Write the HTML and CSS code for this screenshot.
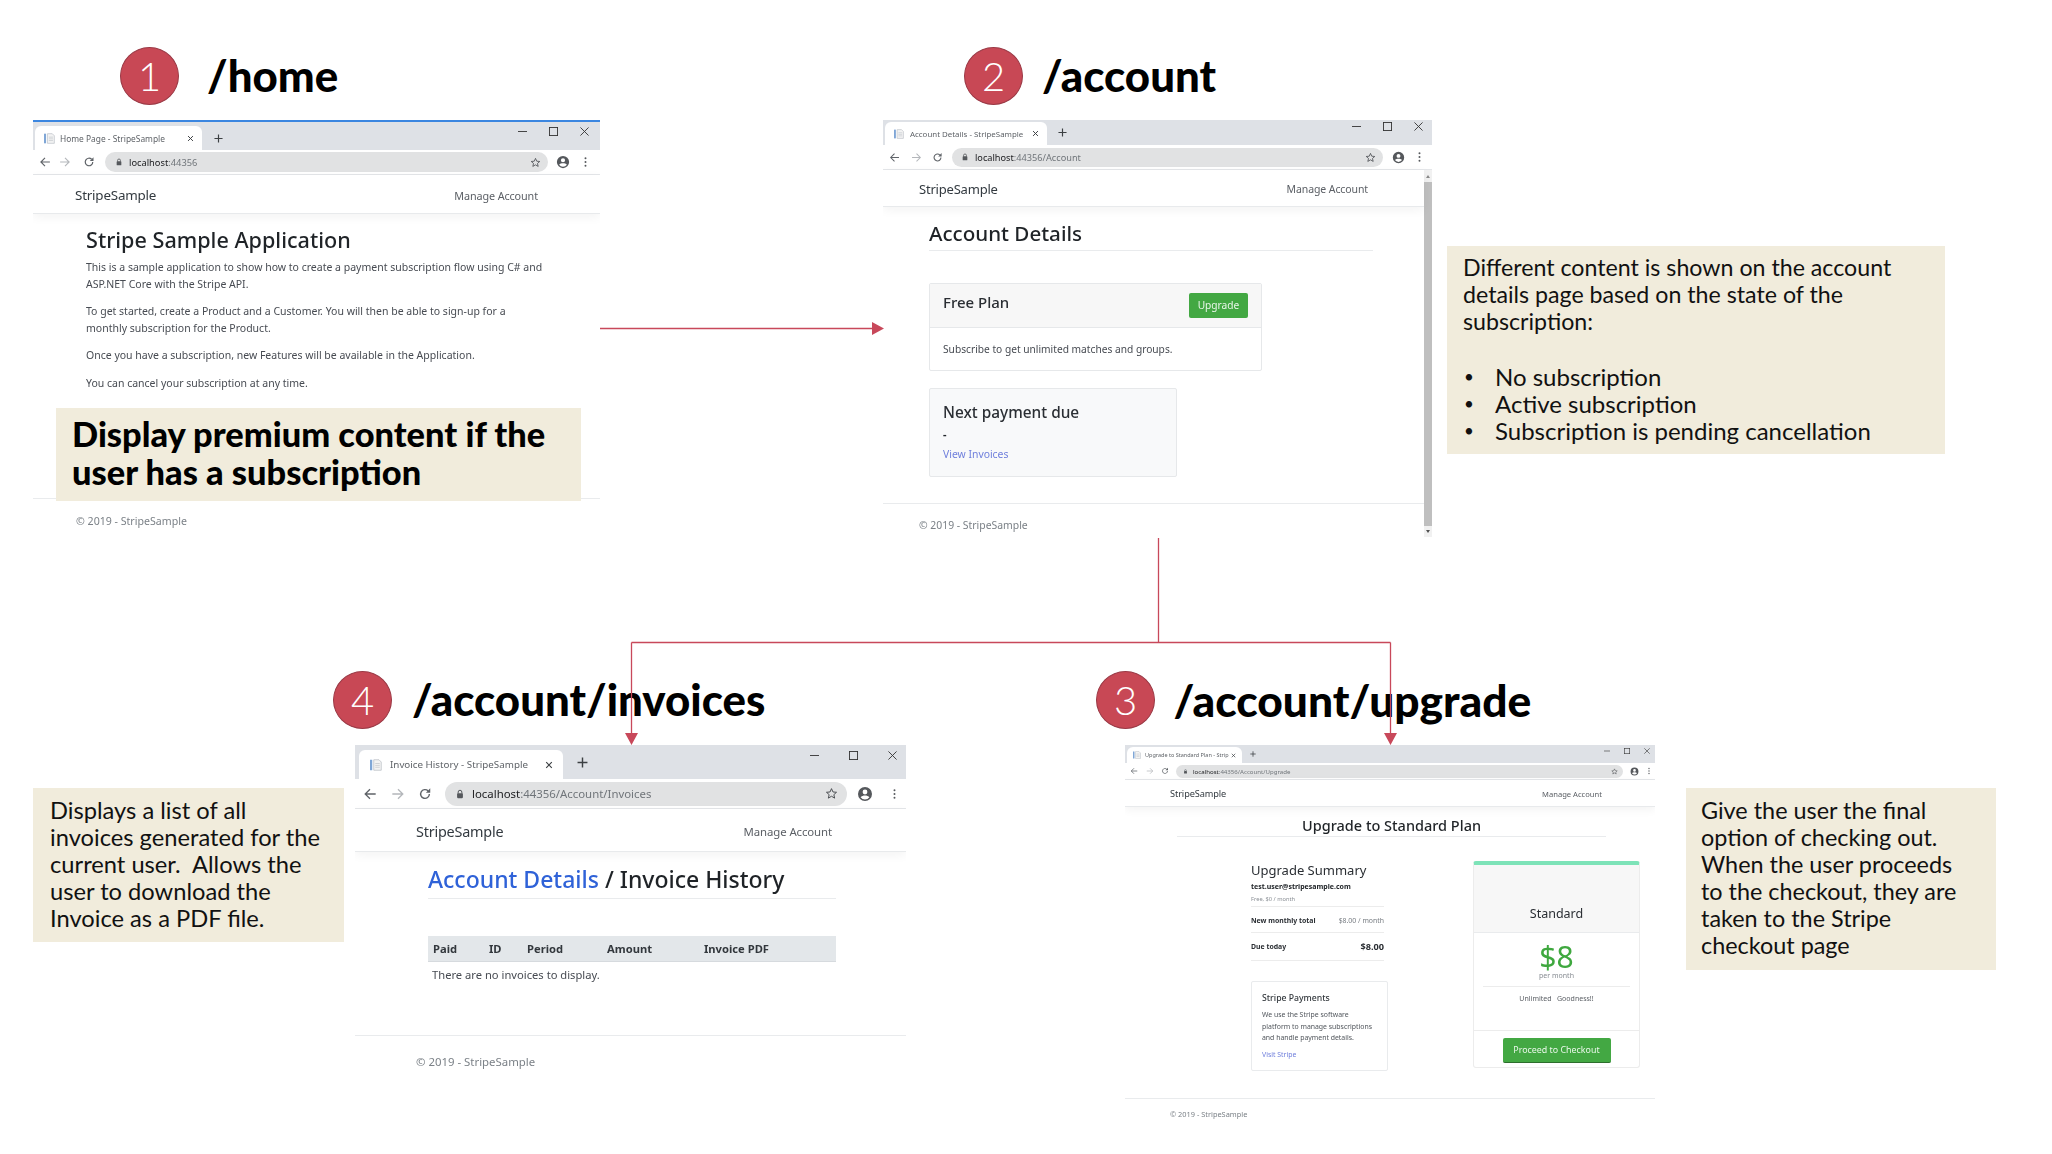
FILE: index.html
```html
<!DOCTYPE html>
<html lang="en">
<head>
<meta charset="utf-8">
<title>Stripe Sample page flow</title>
<link rel="stylesheet" href="styles.css">
</head>
<body>
<svg class="defs" width="0" height="0" aria-hidden="true">
  <symbol id="i-doc" viewBox="0 0 16 16"><rect x="0" y="1" width="3" height="14" fill="#7fa6d6"/><path d="M5 1h7l3 3v11H5z" fill="#f3f3f3" stroke="#b9bec4"/><path d="M7 6h6M7 8.500h6M7 11h6" stroke="#c2c6cb"/></symbol>
  <symbol id="i-x" viewBox="0 0 10 10"><path d="M1.500 1.500l7 7M8.500 1.500l-7 7" fill="none" stroke="currentColor" stroke-width="1.400"/></symbol>
  <symbol id="i-plus" viewBox="0 0 10 10"><path d="M5 .5v9M.5 5h9" fill="none" stroke="currentColor" stroke-width="1.300"/></symbol>
  <symbol id="i-min" viewBox="0 0 10 10"><path d="M0 5h10" stroke="currentColor" fill="none"/></symbol>
  <symbol id="i-max" viewBox="0 0 10 10"><rect x=".5" y=".5" width="9" height="9" fill="none" stroke="currentColor"/></symbol>
  <symbol id="i-close" viewBox="0 0 10 10"><path d="M.5 .5l9 9M9.500 .5l-9 9" fill="none" stroke="currentColor"/></symbol>
  <symbol id="i-back" viewBox="0 0 16 16"><path d="M14.500 8H2.500M8 2.500L2.500 8 8 13.500" fill="none" stroke="currentColor" stroke-width="1.500"/></symbol>
  <symbol id="i-fwd" viewBox="0 0 16 16"><path d="M1.500 8h12M8 2.500L13.500 8 8 13.500" fill="none" stroke="currentColor" stroke-width="1.500"/></symbol>
  <symbol id="i-reload" viewBox="0 0 16 16"><path d="M13 8a5 5 0 1 1-1.500-3.600" fill="none" stroke="currentColor" stroke-width="1.600"/><path d="M14 1.500V6.500H9z" fill="currentColor"/></symbol>
  <symbol id="i-lock" viewBox="0 0 12 12"><path d="M3.800 5.500V3.700a2.200 2.200 0 0 1 4.400 0v1.800" fill="none" stroke="currentColor" stroke-width="1.200"/><rect x="2.500" y="5" width="7" height="6" rx="1" fill="currentColor"/></symbol>
  <symbol id="i-star" viewBox="0 0 16 16"><path d="M8 2l1.800 4.100 4.400.4-3.300 2.900 1 4.300L8 11.400l-3.900 2.300 1-4.300-3.300-2.900 4.400-.4z" fill="none" stroke="currentColor" stroke-width="1.200"/></symbol>
  <symbol id="i-user" viewBox="0 0 16 16"><path fill-rule="evenodd" d="M8 1a7 7 0 1 0 0 14A7 7 0 0 0 8 1zm0 2.600a2.400 2.400 0 1 1 0 4.800 2.400 2.400 0 0 1 0-4.800zM8 13.400a5.600 5.600 0 0 1-4.400-2.200c.8-1.200 2.900-1.700 4.400-1.700s3.600.5 4.400 1.700A5.600 5.600 0 0 1 8 13.400z" fill="currentColor"/></symbol>
  <symbol id="i-dots" viewBox="0 0 4 16"><circle cx="2" cy="3" r="1.300" fill="currentColor"/><circle cx="2" cy="8" r="1.300" fill="currentColor"/><circle cx="2" cy="13" r="1.300" fill="currentColor"/></symbol>
</svg>

<main class="slide">

  <!-- 1 /home -->
  <section class="win win-home">
    <div class="strip">
      <div class="tab"><svg class="ico-fav"><use href="#i-doc"/></svg><span class="tab-title">Home Page - StripeSample</span><svg class="ico-x"><use href="#i-x"/></svg></div>
      <svg class="ico-plus"><use href="#i-plus"/></svg>
      <div class="winbtns"><svg class="ico-w"><use href="#i-min"/></svg><svg class="ico-w"><use href="#i-max"/></svg><svg class="ico-w"><use href="#i-close"/></svg></div>
    </div>
    <div class="tool">
      <svg class="ico-nav"><use href="#i-back"/></svg><svg class="ico-nav dim"><use href="#i-fwd"/></svg><svg class="ico-nav"><use href="#i-reload"/></svg>
      <div class="pill"><svg class="ico-lock"><use href="#i-lock"/></svg><span class="url"><b>localhost</b>:44356</span><svg class="ico-star"><use href="#i-star"/></svg></div>
      <svg class="ico-user"><use href="#i-user"/></svg><svg class="ico-dots"><use href="#i-dots"/></svg>
    </div>
    <nav class="nav"><span class="brand">StripeSample</span><span class="manage">Manage Account</span></nav>
    <div class="main">
      <h1 class="h1">Stripe Sample Application</h1>
      <p class="p">This is a sample application to show how to create a payment subscription flow using C# and<br>ASP.NET Core with the Stripe API.</p>
      <p class="p">To get started, create a Product and a Customer. You will then be able to sign-up for a<br>monthly subscription for the Product.</p>
      <p class="p">Once you have a subscription, new Features will be available in the Application.</p>
      <p class="p">You can cancel your subscription at any time.</p>
    </div>
    <footer class="foot">© 2019 - StripeSample</footer>
  </section>

  <!-- 2 /account -->
  <section class="win win-account">
    <div class="strip">
      <div class="tab"><svg class="ico-fav"><use href="#i-doc"/></svg><span class="tab-title">Account Details - StripeSample</span><svg class="ico-x"><use href="#i-x"/></svg></div>
      <svg class="ico-plus"><use href="#i-plus"/></svg>
      <div class="winbtns"><svg class="ico-w"><use href="#i-min"/></svg><svg class="ico-w"><use href="#i-max"/></svg><svg class="ico-w"><use href="#i-close"/></svg></div>
    </div>
    <div class="tool">
      <svg class="ico-nav"><use href="#i-back"/></svg><svg class="ico-nav dim"><use href="#i-fwd"/></svg><svg class="ico-nav"><use href="#i-reload"/></svg>
      <div class="pill"><svg class="ico-lock"><use href="#i-lock"/></svg><span class="url"><b>localhost</b>:44356/Account</span><svg class="ico-star"><use href="#i-star"/></svg></div>
      <svg class="ico-user"><use href="#i-user"/></svg><svg class="ico-dots"><use href="#i-dots"/></svg>
    </div>
    <div class="viewport">
      <div class="page">
        <nav class="nav"><span class="brand">StripeSample</span><span class="manage">Manage Account</span></nav>
        <div class="main">
          <h1 class="h1 ruled">Account Details</h1>
          <div class="plan">
            <div class="plan-head"><span class="plan-name">Free Plan</span><span class="btn-up">Upgrade</span></div>
            <div class="plan-body">Subscribe to get unlimited matches and groups.</div>
          </div>
          <div class="due">
            <div class="due-title">Next payment due</div>
            <div class="due-val">-</div>
            <div class="link">View Invoices</div>
          </div>
        </div>
        <footer class="foot">© 2019 - StripeSample</footer>
      </div>
      <div class="scrollbar"><span class="sb-up"></span><span class="sb-thumb"></span><span class="sb-down"></span></div>
    </div>
  </section>

  <!-- 4 /account/invoices -->
  <section class="win win-invoices">
    <div class="strip">
      <div class="tab"><svg class="ico-fav"><use href="#i-doc"/></svg><span class="tab-title">Invoice History - StripeSample</span><svg class="ico-x"><use href="#i-x"/></svg></div>
      <svg class="ico-plus"><use href="#i-plus"/></svg>
      <div class="winbtns"><svg class="ico-w"><use href="#i-min"/></svg><svg class="ico-w"><use href="#i-max"/></svg><svg class="ico-w"><use href="#i-close"/></svg></div>
    </div>
    <div class="tool">
      <svg class="ico-nav"><use href="#i-back"/></svg><svg class="ico-nav dim"><use href="#i-fwd"/></svg><svg class="ico-nav"><use href="#i-reload"/></svg>
      <div class="pill"><svg class="ico-lock"><use href="#i-lock"/></svg><span class="url"><b>localhost</b>:44356/Account/Invoices</span><svg class="ico-star"><use href="#i-star"/></svg></div>
      <svg class="ico-user"><use href="#i-user"/></svg><svg class="ico-dots"><use href="#i-dots"/></svg>
    </div>
    <nav class="nav"><span class="brand">StripeSample</span><span class="manage">Manage Account</span></nav>
    <div class="main">
      <h1 class="h1 ruled"><span class="h1-link">Account Details</span> / Invoice History</h1>
      <div class="thead"><span>Paid</span><span>ID</span><span>Period</span><span>Amount</span><span>Invoice PDF</span></div>
      <div class="tnone">There are no invoices to display.</div>
    </div>
    <footer class="foot">© 2019 - StripeSample</footer>
  </section>

  <!-- 3 /account/upgrade -->
  <section class="win win-upgrade">
    <div class="strip">
      <div class="tab"><svg class="ico-fav"><use href="#i-doc"/></svg><span class="tab-title">Upgrade to Standard Plan - Strip</span><svg class="ico-x"><use href="#i-x"/></svg></div>
      <svg class="ico-plus"><use href="#i-plus"/></svg>
      <div class="winbtns"><svg class="ico-w"><use href="#i-min"/></svg><svg class="ico-w"><use href="#i-max"/></svg><svg class="ico-w"><use href="#i-close"/></svg></div>
    </div>
    <div class="tool">
      <svg class="ico-nav"><use href="#i-back"/></svg><svg class="ico-nav dim"><use href="#i-fwd"/></svg><svg class="ico-nav"><use href="#i-reload"/></svg>
      <div class="pill"><svg class="ico-lock"><use href="#i-lock"/></svg><span class="url"><b>localhost</b>:44356/Account/Upgrade</span><svg class="ico-star"><use href="#i-star"/></svg></div>
      <svg class="ico-user"><use href="#i-user"/></svg><svg class="ico-dots"><use href="#i-dots"/></svg>
    </div>
    <nav class="nav"><span class="brand">StripeSample</span><span class="manage">Manage Account</span></nav>
    <div class="main">
      <h1 class="h1 ruled centered">Upgrade to Standard Plan</h1>
      <div class="up-cols">
        <div class="up-left">
          <div class="sum-title">Upgrade Summary</div>
          <div class="sum-mail">test.user@stripesample.com</div>
          <div class="sum-free">Free, $0 / month</div>
          <div class="sum-row"><b>New monthly total</b><span class="muted">$8.00 / month</span></div>
          <div class="sum-row due-row"><b>Due today</b><b class="sum-amt">$8.00</b></div>
          <div class="pay">
            <div class="pay-title">Stripe Payments</div>
            <div class="pay-text">We use the Stripe software<br>platform to manage subscriptions<br>and handle payment details.</div>
            <div class="pay-link">Visit Stripe</div>
          </div>
        </div>
        <div class="price">
          <div class="price-head">Standard</div>
          <div class="price-body">
            <div class="price-amt">$8</div>
            <div class="price-per">per month</div>
            <div class="price-feat">Unlimited&nbsp;&nbsp;&nbsp;Goodness!!</div>
          </div>
          <div class="price-foot"><span class="btn-go">Proceed to Checkout</span></div>
        </div>
      </div>
    </div>
    <footer class="foot">© 2019 - StripeSample</footer>
  </section>

  <!-- route titles -->
  <header class="route route-1"><span class="num">1</span><h2 class="route-name">/home</h2></header>
  <header class="route route-2"><span class="num">2</span><h2 class="route-name">/account</h2></header>
  <header class="route route-4"><span class="num">4</span><h2 class="route-name">/account/invoices</h2></header>
  <header class="route route-3"><span class="num">3</span><h2 class="route-name route-name-wide">/account/upgrade</h2></header>

  <!-- callouts -->
  <div class="note note-premium">Display premium content if the<br>user has a subscription</div>
  <div class="note note-account">
    <p class="note-p">Different content is shown on the account<br>details page based on the state of the<br>subscription:</p>
    <ul class="note-list"><li>No subscription</li><li>Active subscription</li><li>Subscription is pending cancellation</li></ul>
  </div>
  <div class="note note-invoices">Displays a list of all<br>invoices generated for the<br>current user.&nbsp; Allows the<br>user to download the<br>Invoice as a PDF file.</div>
  <div class="note note-upgrade">Give the user the final<br>option of checking out.<br>When the user proceeds<br>to the checkout, they are<br>taken to the Stripe<br>checkout page</div>

  <!-- connectors -->
  <svg class="arrows" viewBox="0 0 2052 1154" aria-hidden="true">
    <path d="M600 328.500H873M1158.500 538V642.500M631.500 642.500H1390.500M631.500 642.500V733M1390.500 642.500V733" fill="none" stroke="#c8485a" stroke-width="1.300"/>
    <path d="M872 322l12 6.500-12 6.500zM625 733h13l-6.500 12zM1384 733h13l-6.500 12z" fill="#c8485a"/>
  </svg>
</main>
</body>
</html>
```
FILE: styles.css
```css
* { box-sizing: border-box; }
html, body { margin: 0; padding: 0; background: #fff; }
.defs { position: absolute; }
.slide {
  position: relative;
  width: 2052px;
  height: 1154px;
  overflow: hidden;
  background: #fff;
  font-family: "Noto Sans", "Open Sans", sans-serif;
  color: #212529;
}
h1, h2, p, ul { margin: 0; padding: 0; font-weight: 400; }

/* ---------- browser windows (free canvas) ---------- */
.win {
  position: absolute;
  display: flex;
  flex-direction: column;
  background: #fff;
  overflow: hidden;
  filter: blur(.3px);
}
.win-home { left: 33px; top: 120px; width: 567px; height: 422px; border-top: 2px solid #3b86e0; }
.win-account { left: 883px; top: 120px; width: 549px; height: 417px; }
.win-invoices { left: 355px; top: 745px; width: 551px; height: 345px; }
.win-upgrade { left: 1125px; top: 745px; width: 530px; height: 385px; filter: blur(.45px); }

.strip { display: flex; align-items: flex-end; background: #dee1e6; flex: none; position: relative; }
.tab {
  display: flex; align-items: center;
  background: #fff;
  border-radius: 6px 6px 0 0;
}
.ico-fav { flex: none; }
.tab-title { flex: 1; white-space: nowrap; overflow: hidden; color: #5f6368; }
.ico-x { color: #3c4043; flex: none; }
.ico-plus { color: #3c4043; flex: none; align-self: center; }
.winbtns { margin-left: auto; align-self: flex-start; display: flex; color: #333; }
.tool { display: flex; align-items: center; background: #fff; border-bottom: 1px solid #e4e6e9; flex: none; }
.ico-nav { color: #5f6368; flex: none; }
.ico-nav.dim { color: #b4b7bb; }
.pill { display: flex; align-items: center; background: #e1e2e3; border-radius: 20px; flex: 1; min-width: 0; }
.ico-lock { color: #55585c; flex: none; }
.url { flex: 1; color: #70757a; white-space: nowrap; }
.url b { font-weight: 400; color: #202124; }
.ico-star { color: #4a4d51; flex: none; }
.ico-user { color: #55585c; flex: none; }
.ico-dots { color: #55585c; flex: none; }

.nav {
  display: flex; align-items: center; justify-content: space-between;
  flex: none;
  background: #fff;
  border-bottom: 1px solid #e8eaec;
  box-shadow: 0 3px 10px rgba(0,0,0,.05);
  position: relative;
}
.brand { color: #333a40; letter-spacing: -.2px; }
.manage { color: #5c6066; letter-spacing: -.1px; }
.main { flex: none; }
.h1 { color: #1f2327; font-weight: 500; }
.ruled { border-bottom: 1px solid #e9ebed; }
.p { color: #474b52; }
.foot { margin-top: auto; flex: none; border-top: 1px solid #e9ebed; color: #7b8187; white-space: nowrap; }

/* window 1 */
.win-home .strip { height: 28px; padding-left: 2px; }
.win-home .tab { width: 167px; height: 24px; padding: 0 8px 0 9px; }
.win-home .ico-fav { width: 11px; height: 13px; margin-right: 5px; }
.win-home .tab-title { font-size: 8.400px; }
.win-home .ico-x { width: 7px; height: 7px; }
.win-home .ico-plus { width: 9px; height: 9px; margin: 4px 0 0 12px; }
.win-home .winbtns { gap: 22px; padding: 5px 11px 0 0; }
.win-home .ico-w { width: 9px; height: 9px; }
.win-home .tool { height: 25px; padding: 0 13px 0 5.500px; }
.win-home .ico-nav { width: 12px; height: 12px; }
.win-home .ico-nav:nth-child(1) { margin-right: 8.500px; }
.win-home .ico-nav:nth-child(2) { margin-right: 12px; }
.win-home .ico-nav:nth-child(3) { margin-right: 10px; }
.win-home .pill { height: 20px; padding: 0 7.500px 0 10px; }
.win-home .ico-lock { width: 8px; height: 8px; margin-right: 6px; }
.win-home .url { font-size: 9.300px; }
.win-home .ico-star { width: 11px; height: 11px; }
.win-home .ico-user { width: 14px; height: 14px; margin: 0 14px 0 8px; }
.win-home .ico-dots { width: 3px; height: 12px; }
.win-home .nav { height: 39px; padding: 2px 62px 0 42px; }
.win-home .brand { font-size: 13.400px; }
.win-home .manage { font-size: 10.800px; }
.win-home .main { padding: 11px 0 0 53px; }
.win-home .h1 { font-size: 21.600px; line-height: 30px; margin-bottom: 4px; }
.win-home .p { font-size: 10.500px; line-height: 16.500px; margin-bottom: 11.200px; white-space: nowrap; }
.win-home .foot { height: 44px; padding: 14px 0 0 43px; font-size: 10.600px; line-height: 16px; }

/* window 2 */
.win-account .strip { height: 25px; padding-left: 2px; }
.win-account .tab { width: 162px; height: 23px; padding: 0 8px 0 9px; }
.win-account .ico-fav { width: 10px; height: 12px; margin-right: 6px; }
.win-account .tab-title { font-size: 7.900px; }
.win-account .ico-x { width: 7px; height: 7px; }
.win-account .ico-plus { width: 9px; height: 9px; margin: 0 0 0 11px; }
.win-account .winbtns { gap: 22px; padding: 2px 9px 0 0; }
.win-account .ico-w { width: 9px; height: 9px; }
.win-account .tool { height: 25px; padding: 0 11.500px 0 6px; }
.win-account .ico-nav { width: 11px; height: 11px; }
.win-account .ico-nav:nth-child(1) { margin-right: 10.500px; }
.win-account .ico-nav:nth-child(2) { margin-right: 10px; }
.win-account .ico-nav:nth-child(3) { margin-right: 9.500px; }
.win-account .pill { height: 19px; padding: 0 7.500px 0 9px; }
.win-account .ico-lock { width: 8px; height: 8px; margin-right: 6px; }
.win-account .url { font-size: 9.200px; }
.win-account .ico-star { width: 11px; height: 11px; }
.win-account .ico-user { width: 13px; height: 13px; margin: 0 13px 0 8.500px; }
.win-account .ico-dots { width: 3px; height: 12px; }
.viewport { flex: 1; display: flex; min-height: 0; }
.page { flex: 1; display: flex; flex-direction: column; min-width: 0; }
.scrollbar { width: 8px; flex: none; background: #f1f1f1; display: flex; flex-direction: column; align-items: center; }
.sb-up { flex: none; width: 0; height: 0; margin: 5px 0 4px; border: 2.500px solid transparent; border-bottom: 3px solid #8a8a8a; border-top: 0; }
.sb-thumb { flex: 1; width: 100%; background: #bfbfbf; }
.sb-down { flex: none; width: 0; height: 0; margin: 4px 0 4px; border: 2.500px solid transparent; border-top: 3px solid #505050; border-bottom: 0; }
.win-account .nav { height: 37px; padding: 2px 56px 0 36px; }
.win-account .brand { font-size: 13px; }
.win-account .manage { font-size: 10.500px; }
.win-account .main { padding: 11px 0 0 46px; }
.win-account .h1 { font-size: 20.600px; line-height: 30px; width: 444px; padding-bottom: 2px; margin-bottom: 32px; height: 33px; }
.plan { width: 333px; border: 1px solid #e6e8ea; border-radius: 2px; background: #fff; }
.plan-head { height: 44px; display: flex; justify-content: space-between; padding: 8px 13px 0; background: #f7f7f7; border-bottom: 1px solid #e6e8ea; }
.plan-name { font-size: 15px; line-height: 20px; font-weight: 500; color: #2a2e33; }
.btn-up { width: 59px; height: 25px; margin-top: 1px; border-radius: 2px; background: #43a843; color: #e9f6e9; font-size: 10.200px; line-height: 25px; text-align: center; }
.plan-body { height: 42px; padding: 13px 13px 0; font-size: 10.200px; line-height: 16px; color: #474b52; white-space: nowrap; }
.due { width: 248px; height: 89px; margin-top: 17px; padding: 13px 13px 0; border: 1px solid #e6e8ea; border-radius: 2px; background: #f8f9fa; }
.due-title { font-size: 15.400px; line-height: 22px; font-weight: 500; color: #2a2e33; }
.due-val { font-size: 11px; line-height: 20px; font-weight: 700; }
.link { font-size: 10.400px; line-height: 20px; color: #6f7fdc; }
.win-account .foot { height: 34px; padding: 13px 0 0 36px; font-size: 10.400px; line-height: 16px; }

/* window 4 */
.win-invoices .strip { height: 34px; padding-left: 4px; }
.win-invoices .tab { width: 204px; height: 29px; padding: 0 10px 0 11px; }
.win-invoices .ico-fav { width: 12px; height: 14px; margin-right: 8px; }
.win-invoices .tab-title { font-size: 9.800px; }
.win-invoices .ico-x { width: 8px; height: 8px; }
.win-invoices .ico-plus { width: 11px; height: 11px; margin: 0 0 0 14px; }
.win-invoices .winbtns { gap: 30px; padding: 6px 9px 0 0; }
.win-invoices .ico-w { width: 9px; height: 9px; }
.win-invoices .tool { height: 30px; padding: 0 10.500px 0 8px; }
.win-invoices .ico-nav { width: 14px; height: 14px; }
.win-invoices .ico-nav:nth-child(1) { margin-right: 14px; }
.win-invoices .ico-nav:nth-child(2) { margin-right: 13px; }
.win-invoices .ico-nav:nth-child(3) { margin-right: 13px; }
.win-invoices .pill { height: 24px; padding: 0 9.500px 0 10px; }
.win-invoices .ico-lock { width: 10px; height: 10px; margin-right: 7px; }
.win-invoices .url { font-size: 11.400px; }
.win-invoices .ico-star { width: 13px; height: 13px; }
.win-invoices .ico-user { width: 16px; height: 16px; margin: 0 19.500px 0 10px; }
.win-invoices .ico-dots { width: 3px; height: 14px; }
.win-invoices .nav { height: 43px; padding: 2px 74px 0 61px; }
.win-invoices .brand { font-size: 14.400px; }
.win-invoices .manage { font-size: 11.400px; }
.win-invoices .main { padding: 11px 0 0 73px; }
.win-invoices .h1 { font-size: 23px; line-height: 33px; width: 408px; height: 36px; margin-bottom: 37px; }
.h1-link { color: #2f62d8; }
.thead { width: 408px; height: 26px; display: grid; grid-template-columns: 56px 38px 80px 97px 1fr; padding-left: 5px; align-items: center; background: #e3e7ea; border-bottom: 1px solid #d6dade; font-size: 11.200px; font-weight: 700; color: #33383d; }
.tnone { font-size: 11.200px; line-height: 16px; padding: 5px 0 0 4px; color: #474b52; }
.win-invoices .foot { height: 55px; padding: 17px 0 0 61px; font-size: 11.400px; line-height: 18px; }

/* window 3 */
.win-upgrade .strip { height: 18px; padding-left: 2px; }
.win-upgrade .tab { width: 115px; height: 16px; padding: 0 6px 0 6px; }
.win-upgrade .ico-fav { width: 8px; height: 8px; margin-right: 4px; }
.win-upgrade .tab-title { font-size: 5.500px; }
.win-upgrade .ico-x { width: 5px; height: 5px; }
.win-upgrade .ico-plus { width: 6px; height: 6px; margin: 0 0 0 8px; }
.win-upgrade .winbtns { gap: 14px; padding: 3px 5px 0 0; }
.win-upgrade .ico-w { width: 6px; height: 6px; }
.win-upgrade .tool { height: 17px; padding: 0 5px 0 5px; }
.win-upgrade .ico-nav { width: 8px; height: 8px; }
.win-upgrade .ico-nav:nth-child(1) { margin-right: 8px; }
.win-upgrade .ico-nav:nth-child(2) { margin-right: 7px; }
.win-upgrade .ico-nav:nth-child(3) { margin-right: 7px; }
.win-upgrade .pill { height: 13px; padding: 0 5px 0 7px; }
.win-upgrade .ico-lock { width: 5px; height: 5px; margin-right: 5px; }
.win-upgrade .url { font-size: 6.100px; }
.win-upgrade .ico-star { width: 7px; height: 7px; }
.win-upgrade .ico-user { width: 9px; height: 9px; margin: 0 9px 0 7px; }
.win-upgrade .ico-dots { width: 2px; height: 8px; }
.win-upgrade .nav { height: 27px; padding: 1px 53px 0 45px; }
.win-upgrade .brand { font-size: 9.200px; letter-spacing: -.1px; }
.win-upgrade .manage { font-size: 7.600px; letter-spacing: 0; }
.win-upgrade .main { padding: 9px 49px 0 52px; }
.win-upgrade .h1 { font-size: 14.500px; line-height: 19px; height: 21px; }
.centered { text-align: center; }
.up-cols { display: flex; gap: 85px; padding: 24px 0 0 74px; margin-right: -34px; }
.up-left { width: 137px; flex: none; }
.sum-title { font-size: 13px; line-height: 18px; color: #2a2e33; }
.sum-mail { margin-top: 3px; font-size: 7px; line-height: 10px; font-weight: 700; width: 133px; }
.sum-free { font-size: 5.700px; line-height: 10px; margin-top: 2px; padding-bottom: 2px; color: #8a8f95; width: 133px; border-bottom: 1px solid #ececec; }
.sum-row { width: 133px; display: flex; align-items: center; justify-content: space-between; height: 26px; padding-top: 2px; border-bottom: 1px solid #ececec; font-size: 6.900px; color: #2a2e33; white-space: nowrap; }
.muted { color: #777c82; }
.due-row { height: 28px; padding-top: 0; }
.sum-amt { font-size: 9.200px; }
.pay { width: 137px; height: 90px; margin-top: 20px; padding: 9px 10px 0; border: 1px solid #e9ebed; border-radius: 2px; }
.pay-title { font-size: 8.700px; line-height: 14px; font-weight: 500; color: #33383d; }
.pay-text { margin-top: 4px; font-size: 6.900px; line-height: 11.700px; color: #51565c; white-space: nowrap; }
.pay-link { margin-top: 6px; font-size: 6.900px; line-height: 10px; color: #6f7fdc; }
.price { width: 167px; height: 207px; flex: none; display: flex; flex-direction: column; border: 1px solid #ececec; border-top: 4px solid #7de3b8; border-radius: 3px; }
.price-head { height: 68px; padding-top: 40px; background: #f7f7f7; border-bottom: 1px solid #e9ebed; text-align: center; font-size: 12.500px; line-height: 18px; color: #2a2e33; }
.price-body { height: 97px; text-align: center; margin: 0 9px; }
.price-amt { font-size: 30px; line-height: 30px; margin-top: 9px; color: #3fa83f; }
.price-per { font-size: 7px; line-height: 9px; margin-top: -1px; padding-bottom: 6px; color: #878c92; border-bottom: 1px solid #ececec; }
.price-feat { margin-top: 7px; font-size: 7px; line-height: 10px; color: #5c6066; white-space: nowrap; }
.price-foot { flex: 1; border-top: 1px solid #ececec; text-align: center; padding-top: 5px; }
.btn-go { display: inline-block; width: 108px; height: 25px; border-radius: 2px; background: #43a843; border-bottom: 1px solid #2c6e2c; color: #eaf7ea; font-size: 8.900px; line-height: 24px; }
.win-upgrade .foot { height: 32px; padding: 9px 0 0 45px; font-size: 7.400px; line-height: 12px; }

/* ---------- route titles ---------- */
.route { position: absolute; display: flex; align-items: center; height: 58px; }
.route-1 { left: 120px; top: 46px; gap: 28px; }
.route-2 { left: 964px; top: 46px; gap: 19px; }
.route-4 { left: 333px; top: 670px; gap: 20px; }
.route-3 { left: 1096px; top: 670px; gap: 18.500px; }
.num {
  width: 59px; height: 58px; flex: none;
  border-radius: 50%;
  background: #c84855;
  border: 1.500px solid #9a3a46;
  color: #fff;
  display: flex; align-items: center; justify-content: center;
  font-family: "Lato", sans-serif;
  font-weight: 300;
  font-size: 40px;
  position: relative;
  top: 1px;
}
.route-name {
  font-family: "Lato", sans-serif;
  font-weight: 900;
  font-size: 43.800px;
  color: #000;
  white-space: nowrap;
}
.route-name-wide { font-size: 44.300px; }

/* ---------- callouts ---------- */
.note { position: absolute; background: #f1ecdc; color: #111; font-family: "Lato", sans-serif; font-size: 23.400px; line-height: 27px; white-space: nowrap; font-weight: 400; }
.note-premium { left: 56px; top: 408px; width: 525px; height: 93px; padding: 7px 0 0 16px; font-size: 34.400px; line-height: 38px; font-weight: 900; color: #000; }
.note-account { left: 1447px; top: 246px; width: 498px; height: 208px; padding: 8px 0 0 16px; font-size: 23.200px; }
.note-list { list-style: none; margin-top: 28px; font-size: 24px; }
.note-list li { position: relative; padding-left: 32px; }
.note-list li::before { content: "•"; position: absolute; left: 1px; top: 0; font-size: 17px; }
.note-invoices { left: 33px; top: 788px; width: 311px; height: 154px; padding: 9px 0 0 17px; font-size: 23.700px; }
.note-upgrade { left: 1686px; top: 788px; width: 310px; height: 182px; padding: 9px 0 0 15px; }

.arrows { position: absolute; left: 0; top: 0; width: 2052px; height: 1154px; pointer-events: none; }
```
